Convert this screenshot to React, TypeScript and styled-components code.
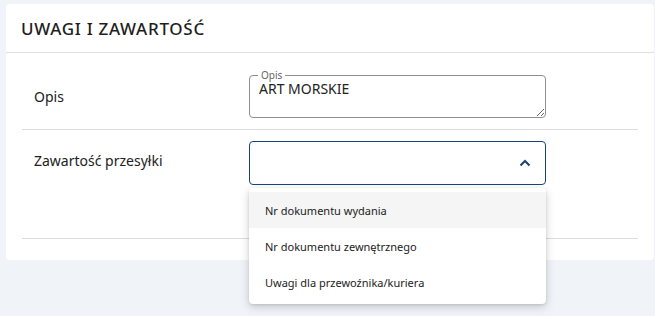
import React from 'react'
import styled, { createGlobalStyle } from 'styled-components'

const GlobalStyle = createGlobalStyle`
  html, body {
    margin: 0;
    padding: 0;
    background: #f0f4f8;
    font-family: "Noto Sans", "Open Sans", sans-serif;
    color: #222;
  }
`

export const Page = styled.div`
  width: 655px;
  height: 316px;
  padding: 4px 1px 0 6px;
  box-sizing: border-box;
  overflow: hidden;
`

export const Card = styled.div`
  background: #fff;
  border-radius: 4px;
  padding-bottom: 21px;
`

export const CardHeader = styled.div`
  height: 48px;
  display: flex;
  align-items: center;
  padding-left: 15px;
  border-bottom: 1px solid #e0e0e0;
  font-size: 17px;
  font-weight: 500;
  letter-spacing: 0.7px;
  color: #1e1e1e;
`

export const Body = styled.div`
  padding: 0 16px;
`

export const Row = styled.div<{ pad: string }>`
  display: grid;
  grid-template-columns: 227px 297px;
  padding: ${({ pad }) => pad};
  border-bottom: 1px solid #dcdcdc;
`

export const Label = styled.div<{ top: number }>`
  padding-left: 12px;
  padding-top: ${({ top }) => top}px;
  font-size: 14px;
  line-height: 19px;
  color: #222;
`

export const Outlined = styled.div`
  position: relative;
  height: 43px;
  box-sizing: border-box;
  border: 1px solid #8f8f8f;
  border-radius: 4px;
  display: flex;
`

export const Notch = styled.span`
  position: absolute;
  top: -7px;
  left: 8px;
  padding: 0 3px;
  background: #fff;
  font-size: 10px;
  line-height: 12px;
  color: #666;
`

export const TextArea = styled.textarea`
  flex: 1;
  border: none;
  outline: none;
  margin: 0;
  padding: 3px 9px 0;
  font-family: inherit;
  font-size: 14px;
  line-height: 19px;
  color: #222;
  background: transparent;
  border-radius: 4px;
  resize: both;
`

export const SelectWrap = styled.div`
  position: relative;
`

export const SelectBox = styled.div`
  height: 44px;
  box-sizing: border-box;
  border: 1px solid #1c4472;
  border-radius: 4px;
  display: flex;
  align-items: center;
  justify-content: flex-end;
  padding-right: 14px;
`

export const Menu = styled.ul`
  position: absolute;
  left: 0;
  right: 0;
  top: 47px;
  margin: 0;
  padding: 4px 0;
  list-style: none;
  background: #fff;
  border-radius: 4px;
  box-shadow: 0 3px 10px rgba(0, 0, 0, 0.18), 0 1px 3px rgba(0, 0, 0, 0.1);
  overflow: hidden;
  z-index: 2;
`

export const MenuItem = styled.li<{ active?: boolean }>`
  height: 36px;
  display: flex;
  align-items: center;
  padding-left: 16px;
  font-size: 11px;
  color: #222;
  background: ${({ active }) => (active ? '#f5f5f5' : '#fff')};
`

const ChevronUp = () => (
  <svg width="12" height="8" viewBox="0 0 12 8">
    <path d="M1.5 6.5 L6 2 L10.5 6.5" fill="none" stroke="#1c4472" strokeWidth="2" />
  </svg>
)

const options = ['Nr dokumentu wydania', 'Nr dokumentu zewnętrznego', 'Uwagi dla przewoźnika/kuriera']

export default function App(): JSX.Element {
  return (
    <>
      <GlobalStyle />
      <Page>
        <Card>
          <CardHeader>UWAGI I ZAWARTOŚĆ</CardHeader>
          <Body>
            <Row pad="22px 0 11px">
              <Label top={12}>Opis</Label>
              <Outlined>
                <Notch>Opis</Notch>
                <TextArea defaultValue="ART MORSKIE" />
              </Outlined>
            </Row>
            <Row pad="11px 0 53px">
              <Label top={10}>Zawartość przesyłki</Label>
              <SelectWrap>
                <SelectBox>
                  <ChevronUp />
                </SelectBox>
                <Menu>
                  {options.map((o, i) => (
                    <MenuItem key={o} active={i === 0}>{o}</MenuItem>
                  ))}
                </Menu>
              </SelectWrap>
            </Row>
          </Body>
        </Card>
      </Page>
    </>
  )
}
